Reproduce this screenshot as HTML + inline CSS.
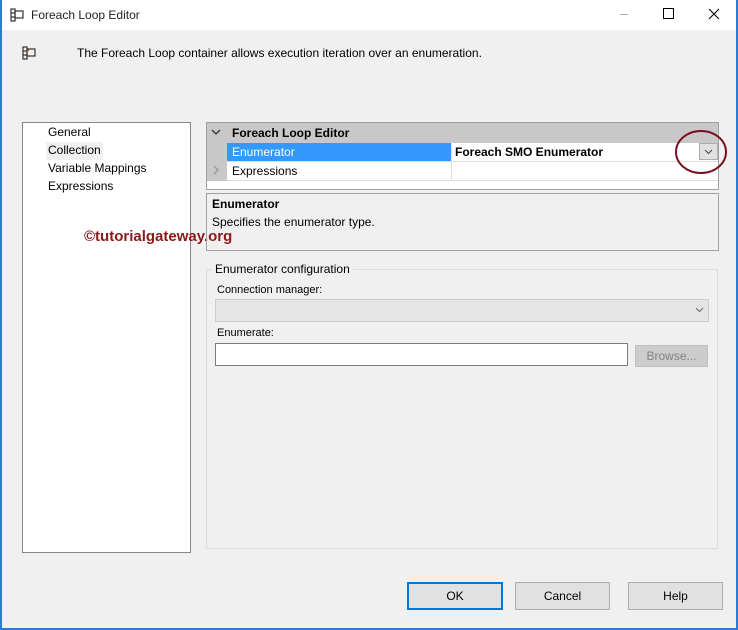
<!DOCTYPE html>
<html><head><meta charset="utf-8"><style>
*{box-sizing:border-box;margin:0;padding:0}
body{width:738px;height:630px;overflow:hidden;background:#f0f0f0;font-family:"Liberation Sans",sans-serif;font-size:12px;color:#000;position:relative}
.a{position:absolute}
.t{position:absolute;white-space:nowrap;line-height:14px}
</style></head><body>
<div class="a" style="left:0;top:0;width:738px;height:30px;background:#fff"></div>
<div class="a" style="left:0;top:0;width:2px;height:630px;background:#2b7bd4"></div>
<div class="a" style="right:0;top:0;width:2px;height:630px;background:#2b7bd4"></div>
<div class="a" style="left:0;bottom:0;width:738px;height:2px;background:#2b7bd4"></div>
<svg class="a" style="left:10px;top:8px" width="16" height="14"><g fill="none" stroke="#333" stroke-width="1.2"><rect x="1" y="1" width="4" height="12"/><line x1="1" y1="5" x2="5" y2="5"/><line x1="1" y1="9" x2="5" y2="9"/><rect x="5" y="3" width="8" height="7"/></g></svg>
<div class="t" style="left:31px;top:8px;font-size:12px;color:#222">Foreach Loop Editor</div>
<div class="a" style="left:620px;top:14px;width:8px;height:1px;background:#aaa"></div>
<div class="a" style="left:663px;top:8px;width:11px;height:11px;border:1px solid #000"></div>
<svg class="a" style="left:708px;top:8px" width="12" height="12"><path d="M1 1L11 11M11 1L1 11" stroke="#000" stroke-width="1.1"/></svg>

<svg class="a" style="left:22px;top:46px" width="16" height="14"><g fill="none" stroke="#333" stroke-width="1.2"><rect x="1" y="1" width="4" height="12"/><line x1="1" y1="5" x2="5" y2="5"/><line x1="1" y1="9" x2="5" y2="9"/><rect x="5" y="3" width="8" height="7"/></g><rect x="6" y="2" width="1" height="3" fill="#a05030"/></svg>
<div class="t" style="left:77px;top:46px">The Foreach Loop container allows execution iteration over an enumeration.</div>

<div class="a" style="left:22px;top:122px;width:169px;height:431px;background:#fff;border:1px solid #828790"></div>
<div class="a" style="left:46px;top:142px;width:57px;height:18px;background:#f0f0f0"></div>
<div class="t" style="left:48px;top:125px">General</div>
<div class="t" style="left:48px;top:143px">Collection</div>
<div class="t" style="left:48px;top:161px">Variable Mappings</div>
<div class="t" style="left:48px;top:179px">Expressions</div>
<div class="t" style="left:84px;top:230px;font-size:15px;font-weight:bold;color:#8b1a1a">©tutorialgateway.org</div>

<div class="a" style="left:206px;top:122px;width:513px;height:68px;background:#fff;border:1px solid #a0a0a0"></div>
<div class="a" style="left:207px;top:123px;width:511px;height:20px;background:#c8c8c8"></div>
<div class="a" style="left:207px;top:143px;width:20px;height:38px;background:#c8c8c8"></div>
<svg class="a" style="left:211px;top:128px" width="10" height="8"><path d="M1 2L5 6L9 2" stroke="#333" stroke-width="1.3" fill="none"/></svg>
<div class="t" style="left:232px;top:126px;font-weight:bold">Foreach Loop Editor</div>
<div class="a" style="left:227px;top:143px;width:224px;height:18px;background:#3399ff"></div>
<div class="t" style="left:232px;top:145px;color:#fff">Enumerator</div>
<div class="a" style="left:451px;top:143px;width:1px;height:38px;background:#ddd"></div>
<div class="a" style="left:227px;top:161px;width:491px;height:1px;background:#ddd"></div>
<div class="a" style="left:227px;top:180px;width:491px;height:1px;background:#ddd"></div>
<div class="t" style="left:455px;top:145px;font-weight:bold">Foreach SMO Enumerator</div>
<div class="a" style="left:699px;top:143px;width:19px;height:17px;background:#e1e1e1;border:1px solid #adadad"></div>
<svg class="a" style="left:704px;top:149px" width="9" height="6"><path d="M1 1L4.5 4.5L8 1" stroke="#444" fill="none"/></svg>
<svg class="a" style="left:212px;top:165px" width="8" height="10"><path d="M2 1L6 5L2 9" stroke="#999" stroke-width="1.3" fill="none"/></svg>
<div class="t" style="left:232px;top:164px">Expressions</div>
<svg class="a" style="left:674px;top:129px" width="56" height="48"><ellipse cx="27" cy="23" rx="25" ry="21" fill="none" stroke="#7a0e1e" stroke-width="2"/></svg>

<div class="a" style="left:206px;top:193px;width:513px;height:58px;border:1px solid #a0a0a0"></div>
<div class="t" style="left:212px;top:197px;font-weight:bold">Enumerator</div>
<div class="t" style="left:212px;top:215px">Specifies the enumerator type.</div>

<div class="a" style="left:206px;top:269px;width:512px;height:280px;border:1px solid #dcdcdc"></div>
<div class="t" style="left:212px;top:262px;background:#f0f0f0;padding:0 3px">Enumerator configuration</div>
<div class="t" style="left:217px;top:283px;font-size:11px">Connection manager:</div>
<div class="a" style="left:215px;top:299px;width:494px;height:23px;background:#e5e5e5;border:1px solid #ccc"></div>
<svg class="a" style="left:695px;top:307px" width="9" height="6"><path d="M1 1L4.5 4.5L8 1" stroke="#666" fill="none"/></svg>
<div class="t" style="left:217px;top:326px;font-size:11px">Enumerate:</div>
<div class="a" style="left:215px;top:343px;width:413px;height:23px;background:#fff;border:1px solid #7a7a7a"></div>
<div class="a" style="left:635px;top:345px;width:73px;height:22px;background:#cccccc;border:1px solid #bfbfbf"></div>
<div class="t" style="left:635px;top:349px;width:73px;text-align:center;color:#838383">Browse...</div>

<div class="a" style="left:407px;top:582px;width:96px;height:28px;background:#e1e1e1;border:2px solid #0078d7"></div>
<div class="t" style="left:407px;top:589px;width:96px;text-align:center">OK</div>
<div class="a" style="left:515px;top:582px;width:95px;height:28px;background:#e1e1e1;border:1px solid #adadad"></div>
<div class="t" style="left:515px;top:589px;width:95px;text-align:center">Cancel</div>
<div class="a" style="left:628px;top:582px;width:95px;height:28px;background:#e1e1e1;border:1px solid #adadad"></div>
<div class="t" style="left:628px;top:589px;width:95px;text-align:center">Help</div>
</body></html>
